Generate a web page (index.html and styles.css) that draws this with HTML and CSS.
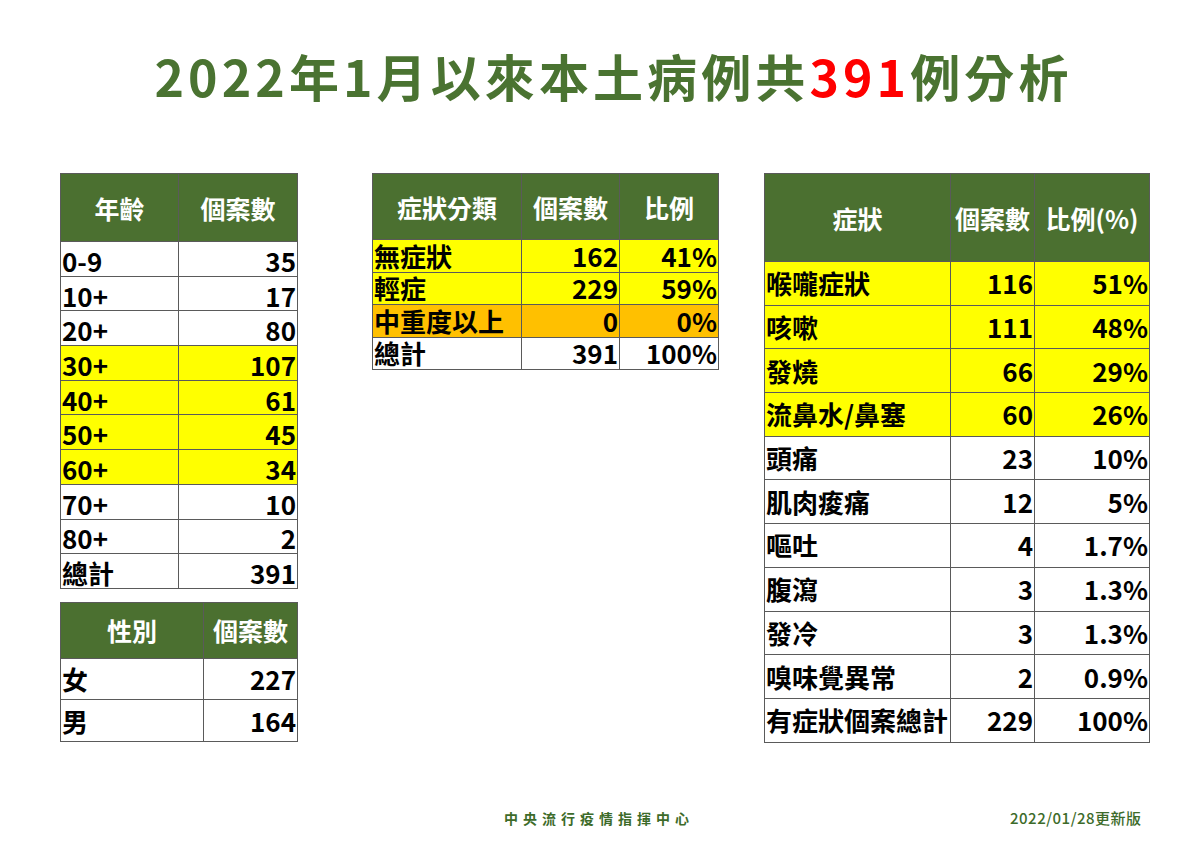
FILE: index.html
```html
<!DOCTYPE html>
<html lang="zh-Hant">
<head>
<meta charset="utf-8">
<title>2022年1月以來本土病例共391例分析</title>
<link rel="stylesheet" href="styles.css">
</head>
<body>
<div class="page">
  <h1 class="title">2022年1月以來本土病例共<span class="red">391</span>例分析</h1>
  <div class="content">
    <div class="col col-1">
      <table class="tbl t-age">
        <colgroup><col class="w118"><col class="w119"></colgroup>
        <thead><tr><th>年齡</th><th>個案數</th></tr></thead>
        <tbody>
          <tr><td>0-9</td><td class="num">35</td></tr>
          <tr><td>10+</td><td class="num">17</td></tr>
          <tr><td>20+</td><td class="num">80</td></tr>
          <tr class="yel"><td>30+</td><td class="num">107</td></tr>
          <tr class="yel"><td>40+</td><td class="num">61</td></tr>
          <tr class="yel"><td>50+</td><td class="num">45</td></tr>
          <tr class="yel"><td>60+</td><td class="num">34</td></tr>
          <tr><td>70+</td><td class="num">10</td></tr>
          <tr><td>80+</td><td class="num">2</td></tr>
          <tr><td>總計</td><td class="num">391</td></tr>
        </tbody>
      </table>
      <table class="tbl t-sex">
        <colgroup><col class="w143"><col class="w94"></colgroup>
        <thead><tr><th>性別</th><th>個案數</th></tr></thead>
        <tbody>
          <tr><td>女</td><td class="num">227</td></tr>
          <tr><td>男</td><td class="num">164</td></tr>
        </tbody>
      </table>
    </div>
    <div class="col col-2">
      <table class="tbl t-cls">
        <colgroup><col class="w149"><col class="w98"><col class="w99"></colgroup>
        <thead><tr><th>症狀分類</th><th>個案數</th><th>比例</th></tr></thead>
        <tbody>
          <tr class="yel"><td>無症狀</td><td class="num">162</td><td class="num">41%</td></tr>
          <tr class="yel"><td>輕症</td><td class="num">229</td><td class="num">59%</td></tr>
          <tr class="org"><td>中重度以上</td><td class="num">0</td><td class="num">0%</td></tr>
          <tr><td>總計</td><td class="num">391</td><td class="num">100%</td></tr>
        </tbody>
      </table>
    </div>
    <div class="col col-3">
      <table class="tbl t-sym">
        <colgroup><col class="w186"><col class="w84"><col class="w115"></colgroup>
        <thead><tr><th>症狀</th><th>個案數</th><th>比例(%)</th></tr></thead>
        <tbody>
          <tr class="yel"><td>喉嚨症狀</td><td class="num">116</td><td class="num">51%</td></tr>
          <tr class="yel"><td>咳嗽</td><td class="num">111</td><td class="num">48%</td></tr>
          <tr class="yel"><td>發燒</td><td class="num">66</td><td class="num">29%</td></tr>
          <tr class="yel"><td>流鼻水/鼻塞</td><td class="num">60</td><td class="num">26%</td></tr>
          <tr><td>頭痛</td><td class="num">23</td><td class="num">10%</td></tr>
          <tr><td>肌肉痠痛</td><td class="num">12</td><td class="num">5%</td></tr>
          <tr><td>嘔吐</td><td class="num">4</td><td class="num">1.7%</td></tr>
          <tr><td>腹瀉</td><td class="num">3</td><td class="num">1.3%</td></tr>
          <tr><td>發冷</td><td class="num">3</td><td class="num">1.3%</td></tr>
          <tr><td>嗅味覺異常</td><td class="num">2</td><td class="num">0.9%</td></tr>
          <tr><td>有症狀個案總計</td><td class="num">229</td><td class="num">100%</td></tr>
        </tbody>
      </table>
    </div>
  </div>
  <footer class="footer">
    <span class="org-name">中央流行疫情指揮中心</span>
    <span class="date">2022/01/28更新版</span>
  </footer>
</div>
</body>
</html>
```

FILE: styles.css
```css
html, body {
  margin: 0;
  padding: 0;
  background: #ffffff;
}
body {
  font-family: "Noto Sans CJK TC", "Noto Sans", sans-serif;
  color: #000;
}
.page {
  width: 1200px;
  height: 848px;
  position: relative;
  overflow: hidden;
}
.title {
  margin: 0;
  padding-top: 48px;
  height: 54px;
  line-height: 54px;
  text-align: center;
  font-size: 50px;
  font-weight: 700;
  color: #4a7331;
  letter-spacing: 4.1px;
  padding-left: 27px;
}
.red { color: #ff0000; }
.content {
  display: flex;
  align-items: flex-start;
  padding-left: 60px;
  margin-top: 71px;
}
.col { display: flex; flex-direction: column; }
.col-2 { margin-left: 74px; }
.col-3 { margin-left: 45px; }

.tbl {
  border-collapse: collapse;
  table-layout: fixed;
  font-weight: 700;
}
.tbl th, .tbl td {
  border: 1px solid #5a5a5a;
  padding: 0 1px 0 1px;
  white-space: nowrap;
}
.tbl th {
  background: #4b7030;
  color: #ffffff;
  text-align: center;
  font-weight: 700;
  font-size: 25px;
  line-height: 30px;
}
.tbl td { text-align: left; }
.tbl td.num { text-align: right; }
.yel td { background: #ffff00; }
.org td { background: #ffc000; }

.w118 { width: 118px; }
.w119 { width: 119px; }
.w143 { width: 143px; }
.w94 { width: 94px; }
.w149 { width: 149px; }
.w98 { width: 98px; }
.w99 { width: 99px; }
.w186 { width: 186px; }
.w84 { width: 84px; }
.w115 { width: 115px; }

.t-age { width: 237px; }
.t-age thead tr { height: 68px; }
.t-age tbody tr { height: 34.7px; }
.t-age td { font-size: 26px; line-height: 28px; padding-top: 4px; height: 29px; }

.t-sex { width: 237px; margin-top: 13px; }
.t-sex thead tr { height: 56px; }
.t-sex tbody tr { height: 41.5px; }
.t-sex td { font-size: 26px; line-height: 30px; }

.t-cls { width: 346px; }
.t-cls thead tr { height: 66px; }
.t-cls tbody tr { height: 32.5px; }
.t-cls td { font-size: 26px; line-height: 28px; height: 31px; }

.t-sym { width: 385px; }
.t-sym thead tr { height: 88px; }
.t-sym tbody tr { height: 43.7px; }
.t-sym td { font-size: 26px; line-height: 32px; }

.footer {
  position: absolute;
  left: 0;
  right: 0;
  top: 807px;
  height: 22px;
  font-size: 14px;
  line-height: 22px;
  color: #3d6b2a;
  font-weight: 700;
}
.org-name {
  position: absolute;
  left: 504px;
  letter-spacing: 5px;
}
.date {
  position: absolute;
  left: 1010px;
  font-size: 15px;
  font-weight: 500;
  letter-spacing: 0.5px;
}
```
